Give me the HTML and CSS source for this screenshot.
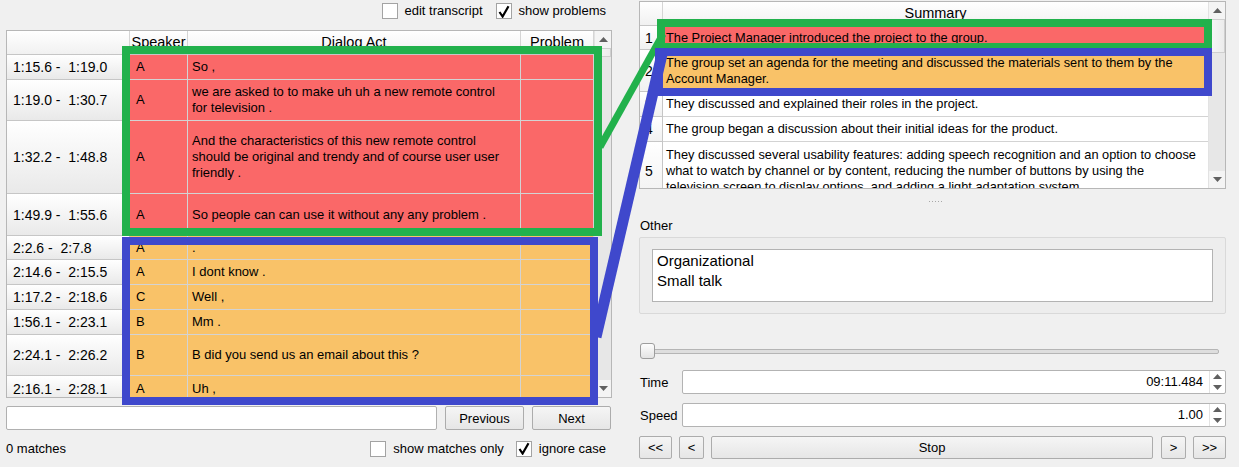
FILE: index.html
```html
<!DOCTYPE html>
<html>
<head>
<meta charset="utf-8">
<title>Transcript</title>
<link rel="stylesheet" href="styles.css">
</head>
<body>
<div class="app">
  <section class="left">
    <div class="topbar">
      <label class="chk"><span class="box"></span><span>edit transcript</span></label>
      <label class="chk"><span class="box"><svg width="12" height="13" viewBox="0 0 12 13"><path d="M1.5 7 L4.6 11.5 L10.5 1.2" fill="none" stroke="#000" stroke-width="2.2"/></svg></span><span>show problems</span></label>
    </div>
    <div class="ltable">
      <div class="lmain">
        <div class="lhead">
          <div class="hcell"></div>
          <div class="hcell">Speaker</div>
          <div class="hcell">Dialog Act</div>
          <div class="hcell">Problem</div>
        </div>
        <div class="lrow red h25"><div class="rh">1:15.6 -  1:19.0</div><div class="c spk">A</div><div class="c da">So ,</div><div class="c pr"></div></div>
        <div class="lrow red h41"><div class="rh">1:19.0 -  1:30.7</div><div class="c spk">A</div><div class="c da">we are asked to to make uh uh a new remote control<br>for television .</div><div class="c pr"></div></div>
        <div class="lrow red h73"><div class="rh">1:32.2 -  1:48.8</div><div class="c spk">A</div><div class="c da">And the characteristics of this new remote control<br>should be original and trendy and of course user user<br>friendly .</div><div class="c pr"></div></div>
        <div class="lrow red h42"><div class="rh">1:49.9 -  1:55.6</div><div class="c spk">A</div><div class="c da">So people can can use it without any any problem .</div><div class="c pr"></div></div>
        <div class="lrow orange h24"><div class="rh">2:2.6 -  2:7.8</div><div class="c spk">A</div><div class="c da">.</div><div class="c pr"></div></div>
        <div class="lrow orange h25"><div class="rh">2:14.6 -  2:15.5</div><div class="c spk">A</div><div class="c da">I dont know .</div><div class="c pr"></div></div>
        <div class="lrow orange h25"><div class="rh">1:17.2 -  2:18.6</div><div class="c spk">C</div><div class="c da">Well ,</div><div class="c pr"></div></div>
        <div class="lrow orange h25"><div class="rh">1:56.1 -  2:23.1</div><div class="c spk">B</div><div class="c da">Mm .</div><div class="c pr"></div></div>
        <div class="lrow orange h41"><div class="rh">2:24.1 -  2:26.2</div><div class="c spk">B</div><div class="c da">B did you send us an email about this ?</div><div class="c pr"></div></div>
        <div class="lrow orange h26"><div class="rh">2:16.1 -  2:28.1</div><div class="c spk">A</div><div class="c da">Uh ,</div><div class="c pr"></div></div>
      </div>
      <div class="vscroll">
        <div class="sbtn"><svg width="9" height="5" viewBox="0 0 9 5"><polygon points="0,5 9,5 4.5,0" fill="#606060"/></svg></div>
        <div class="shandle lh"></div>
        <div class="strack"></div>
        <div class="sbtn"><svg width="9" height="5" viewBox="0 0 9 5"><polygon points="0,0 9,0 4.5,5" fill="#606060"/></svg></div>
      </div>
    </div>
    <div class="searchrow">
      <div class="input"></div>
      <div class="btn wide">Previous</div>
      <div class="btn wide">Next</div>
    </div>
    <div class="bottomrow">
      <span>0 matches</span>
      <div class="opts">
        <label class="chk"><span class="box"></span><span>show matches only</span></label>
        <label class="chk"><span class="box"><svg width="12" height="13" viewBox="0 0 12 13"><path d="M1.5 7 L4.6 11.5 L10.5 1.2" fill="none" stroke="#000" stroke-width="2.2"/></svg></span><span>ignore case</span></label>
      </div>
    </div>
  </section>

  <section class="right">
    <div class="stable">
      <div class="smain">
        <div class="shead"><div class="hcell"></div><div class="hcell">Summary</div></div>
        <div class="srow red s24"><div class="srh">1</div><div class="sc">The Project Manager introduced the project to the group.</div></div>
        <div class="srow orange s42"><div class="srh">2</div><div class="sc">The group set an agenda for the meeting and discussed the materials sent to them by the<br>Account Manager.</div></div>
        <div class="srow s25"><div class="srh">3</div><div class="sc">They discussed and explained their roles in the project.</div></div>
        <div class="srow s25"><div class="srh">4</div><div class="sc">The group began a discussion about their initial ideas for the product.</div></div>
        <div class="srow s59"><div class="srh">5</div><div class="sc">They discussed several usability features: adding speech recognition and an option to choose<br>what to watch by channel or by content, reducing the number of buttons by using the<br>television screen to display options, and adding a light adaptation system.</div></div>
      </div>
      <div class="vscroll">
        <div class="sbtn"><svg width="9" height="5" viewBox="0 0 9 5"><polygon points="0,5 9,5 4.5,0" fill="#606060"/></svg></div>
        <div class="shandle sh"></div>
        <div class="strack"></div>
        <div class="sbtn"><svg width="9" height="5" viewBox="0 0 9 5"><polygon points="0,0 9,0 4.5,5" fill="#606060"/></svg></div>
      </div>
    </div>
    <div class="splitter"><div class="dots"></div></div>
    <div class="otherlabel">Other</div>
    <div class="group">
      <div class="list">
        <div>Organizational</div>
        <div>Small talk</div>
      </div>
    </div>
    <div class="slider">
      <div class="groove"></div>
      <div class="knob"></div>
    </div>
    <div class="field t1">
      <span class="flabel">Time</span>
      <div class="spin">
        <div class="spinval">09:11.484</div>
        <div class="spinbtns">
          <div class="sp"><svg width="9" height="5" viewBox="0 0 9 5"><polygon points="0,5 9,5 4.5,0" fill="#606060"/></svg></div>
          <div class="sp"><svg width="9" height="5" viewBox="0 0 9 5"><polygon points="0,0 9,0 4.5,5" fill="#606060"/></svg></div>
        </div>
      </div>
    </div>
    <div class="field t2">
      <span class="flabel">Speed</span>
      <div class="spin">
        <div class="spinval">1.00</div>
        <div class="spinbtns">
          <div class="sp"><svg width="9" height="5" viewBox="0 0 9 5"><polygon points="0,5 9,5 4.5,0" fill="#606060"/></svg></div>
          <div class="sp"><svg width="9" height="5" viewBox="0 0 9 5"><polygon points="0,0 9,0 4.5,5" fill="#606060"/></svg></div>
        </div>
      </div>
    </div>
    <div class="transport">
      <div class="btn b33">&lt;&lt;</div>
      <div class="btn b25">&lt;</div>
      <div class="btn stop">Stop</div>
      <div class="btn b25 g8">&gt;</div>
      <div class="btn b33">&gt;&gt;</div>
    </div>
  </section>
</div>

<svg class="overlay" width="1239" height="467" viewBox="0 0 1239 467">
  <line x1="600" y1="147" x2="663" y2="34" stroke="#22b14c" stroke-width="7"/>
  <line x1="596" y1="337" x2="663" y2="50" stroke="#3f48cc" stroke-width="11"/>
  <rect x="126" y="50" width="472" height="182" fill="none" stroke="#22b14c" stroke-width="8"/>
  <rect x="661" y="23" width="547" height="24" fill="none" stroke="#22b14c" stroke-width="8"/>
  <rect x="126" y="241" width="468" height="160" fill="none" stroke="#3f48cc" stroke-width="8"/>
  <rect x="659" y="52" width="549" height="40" fill="none" stroke="#3f48cc" stroke-width="8"/>
</svg>
</body>
</html>
```

FILE: styles.css
```css
* { box-sizing: border-box; }
html, body { margin: 0; padding: 0; }
body {
  width: 1239px;
  height: 467px;
  overflow: hidden;
  background: #f0f0f0;
  font-family: "Liberation Sans", Arial, sans-serif;
  font-size: 13px;
  color: #000;
  position: relative;
}
.app { display: flex; height: 467px; }

/* ---------- left ---------- */
.left {
  width: 612px;
  padding-left: 6px;
  display: flex;
  flex-direction: column;
}
.topbar {
  height: 22px;
  display: flex;
  justify-content: flex-end;
  align-items: center;
  gap: 13px;
  padding-right: 6px;
}
.chk { display: flex; align-items: center; gap: 7px; line-height: 16px; }
.box {
  width: 16px;
  height: 16px;
  border: 1px solid #a3a3a3;
  background: #fff;
  display: flex;
  align-items: center;
  justify-content: center;
}

.ltable {
  margin-top: 8px;
  height: 368px;
  border: 1px solid #b7b7b7;
  background: #fff;
  display: flex;
}
.lmain { flex: 1; overflow: hidden; }
.lhead, .lrow {
  display: grid;
  grid-template-columns: 123px 58px 333px 73px;
}
.lhead { height: 24px; }
.hcell {
  background: linear-gradient(#ffffff, #f1f1f1);
  border-right: 1px solid #d5d5d5;
  border-bottom: 1px solid #c6c6c6;
  font-size: 14.5px;
  line-height: 22px;
  text-align: center;
  white-space: nowrap;
  overflow: hidden;
}
.rh {
  background: linear-gradient(#ffffff, #e9e9e9);
  border-right: 1px solid #c6c6c6;
  border-bottom: 1px solid #c6c6c6;
  font-size: 14px;
  padding-left: 6px;
  display: flex;
  align-items: center;
  white-space: pre;
}
.c {
  border-right: 1px solid #d3d3d3;
  border-bottom: 1px solid #d3d3d3;
  display: flex;
  align-items: center;
  line-height: 16px;
  white-space: nowrap;
  overflow: hidden;
}
.spk { padding-left: 6px; }
.da { padding-left: 4px; }
.red .c { background: #fa6868; }
.orange .c { background: #f9c268; }
.h24 { height: 24px; }
.h25 { height: 25px; }
.h26 { height: 26px; }
.h41 { height: 41px; }
.h42 { height: 42px; }
.h73 { height: 73px; }

.vscroll {
  width: 17px;
  display: flex;
  flex-direction: column;
  background: #e7e7e7;
  border-left: 1px solid #e2e2e2;
}
.sbtn {
  height: 17px;
  display: flex;
  align-items: center;
  justify-content: center;
  background: #f4f4f4;
}
.shandle {
  background: linear-gradient(to right, #f7f7f7, #ececec);
  border: 1px solid #cfcfcf;
  border-left: 0;
}
.shandle.lh { height: 9px; }
.shandle.sh { height: 34px; }
.strack { flex: 1; }

.searchrow {
  margin-top: 8px;
  height: 24px;
  display: flex;
  gap: 8px;
}
.input {
  width: 431px;
  background: #fff;
  border: 1px solid #b0b0b0;
  border-radius: 2px;
}
.btn {
  border: 1px solid #acacac;
  border-radius: 2px;
  background: linear-gradient(#f5f5f5, #e6e6e6);
  display: flex;
  align-items: center;
  justify-content: center;
  white-space: nowrap;
}
.btn.wide { width: 79px; }

.bottomrow {
  margin-top: 10px;
  height: 17px;
  display: flex;
  justify-content: space-between;
  align-items: center;
  padding-right: 6px;
}
.opts { display: flex; gap: 12px; }

/* ---------- right ---------- */
.right {
  width: 587px;
  margin-left: 27px;
  padding-top: 1px;
  display: flex;
  flex-direction: column;
}
.stable {
  height: 188px;
  border: 1px solid #b7b7b7;
  background: #fff;
  display: flex;
}
.smain { flex: 1; overflow: hidden; }
.shead, .srow {
  display: grid;
  grid-template-columns: 23px 546px;
}
.shead { height: 24px; }
.srh {
  background: linear-gradient(#ffffff, #f1f1f1);
  border-right: 1px solid #c6c6c6;
  border-bottom: 1px solid #c6c6c6;
  font-size: 14px;
  padding-left: 5px;
  display: flex;
  align-items: center;
}
.sc {
  border-right: 1px solid #d3d3d3;
  border-bottom: 1px solid #d3d3d3;
  padding-left: 3px;
  display: flex;
  align-items: center;
  font-size: 12.8px;
  line-height: 16px;
  white-space: nowrap;
  overflow: hidden;
}
.red .sc { background: #fa6868; }
.orange .sc { background: #f9c268; }
.s24 { height: 24px; }
.s25 { height: 25px; }
.s42 { height: 42px; }
.s59 { height: 59px; }

.splitter {
  height: 24px;
  display: flex;
  justify-content: center;
  align-items: center;
  padding-left: 6px;
}
.dots {
  width: 14px;
  height: 1px;
  background: repeating-linear-gradient(to right, #a8a8a8 0 1px, transparent 1px 3px);
}
.otherlabel {
  height: 24px;
  padding-top: 5px;
  line-height: 16px;
  padding-left: 1px;
}
.group {
  height: 77px;
  border: 1px solid #d9d9d9;
  border-radius: 2px;
  background: #ededed;
  padding: 11px 12px 11px 12px;
}
.list {
  height: 53px;
  background: #fff;
  border: 1px solid #b3b3b3;
  padding: 1px 0 0 4px;
  font-size: 15px;
  line-height: 20px;
}
.slider {
  margin-top: 29px;
  height: 16px;
  position: relative;
  display: flex;
  align-items: center;
  padding-left: 1px;
}
.groove {
  width: 579px;
  height: 5px;
  border: 1px solid #b5b5b5;
  border-radius: 2px;
  background: #dedede;
}
.knob {
  position: absolute;
  left: 1px;
  top: 0;
  width: 15px;
  height: 16px;
  border: 1px solid #9d9d9d;
  border-radius: 3px;
  background: linear-gradient(#fdfdfd, #e4e4e4);
}
.field {
  height: 24px;
  display: flex;
  align-items: center;
}
.field.t1 { margin-top: 11px; }
.field.t2 { margin-top: 9px; }
.flabel { width: 43px; padding-left: 1px; }
.spin {
  flex: 1;
  height: 24px;
  border: 1px solid #b3b3b3;
  border-radius: 2px;
  background: #fff;
  display: flex;
}
.spinval {
  flex: 1;
  text-align: right;
  padding-right: 6px;
  line-height: 22px;
}
.spinbtns {
  width: 16px;
  display: flex;
  flex-direction: column;
  border-left: 1px solid #e3e3e3;
}
.sp {
  flex: 1;
  display: flex;
  align-items: center;
  justify-content: center;
}
.transport {
  margin-top: 9px;
  height: 23px;
  display: flex;
  gap: 7px;
}
.b33 { width: 33px; }
.b25 { width: 25px; }
.stop { flex: 1; }
.g8 { margin-left: 1px; }

.overlay {
  position: absolute;
  left: 0;
  top: 0;
  pointer-events: none;
}
```
